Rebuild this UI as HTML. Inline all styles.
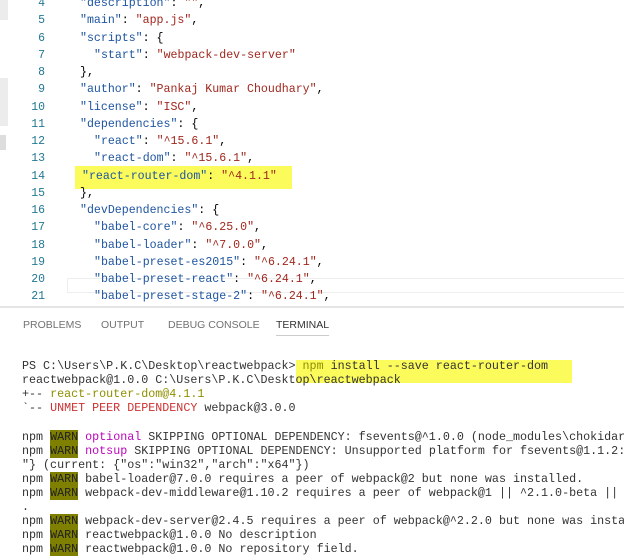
<!DOCTYPE html>
<html><head><style>
body{margin:0;width:624px;height:559px;background:#fff;overflow:hidden;position:relative;font-family:"Liberation Mono",monospace;}
.l{position:absolute;white-space:pre;font-size:11.5px;line-height:14px;}
.n{position:absolute;width:45px;text-align:right;color:#237893;font-size:11.5px;line-height:14px;font-family:"Liberation Mono",monospace;}
.k{color:#1f55a0}.s{color:#a0281e}.p{color:#000}
.t{color:#333;font-size:11.7px;}
.g{color:#8f8f00}.r{color:#cd3131}.m{color:#bc05bc}
.w{background:#7f7f00;color:#222}
.tab{position:absolute;top:319px;font-family:"Liberation Sans",sans-serif;font-size:10.5px;color:#717171;}
</style></head><body>
<div style="position:absolute;left:0;top:0;width:8px;height:20px;background:#ececec"></div>
<div style="position:absolute;left:0;top:78px;width:8px;height:48px;background:#ececec"></div>
<div style="position:absolute;left:0;top:135px;width:6px;height:15px;background:#ddd"></div>
<div style="position:absolute;left:75px;top:166px;width:217px;height:23px;background:#fbfb5c"></div>
<div style="position:absolute;left:67px;top:278px;width:560px;height:15px;border:1px solid #eee;box-sizing:border-box"></div>
<div id="code"></div>
<div style="position:absolute;left:0;top:306px;width:624px;height:2px;background:#e5e5e5"></div>
<div class="tab" style="left:23px">PROBLEMS</div>
<div class="tab" style="left:101px">OUTPUT</div>
<div class="tab" style="left:168px">DEBUG CONSOLE</div>
<div class="tab" style="left:276px;color:#333;border-bottom:1px solid #ccc;padding-bottom:4px">TERMINAL</div>
<div style="position:absolute;left:296px;top:360px;width:276px;height:23px;background:#fbfb5c"></div>
<div id="term"></div>
<script>
var code=[
[4,80,'<span class="k">"description"</span>: <span class="s">""</span>,'],
[5,80,'<span class="k">"main"</span>: <span class="s">"app.js"</span>,'],
[6,80,'<span class="k">"scripts"</span>: {'],
[7,94,'<span class="k">"start"</span>: <span class="s">"webpack-dev-server"</span>'],
[8,80,'},'],
[9,80,'<span class="k">"author"</span>: <span class="s">"Pankaj Kumar Choudhary"</span>,'],
[10,80,'<span class="k">"license"</span>: <span class="s">"ISC"</span>,'],
[11,80,'<span class="k">"dependencies"</span>: {'],
[12,94,'<span class="k">"react"</span>: <span class="s">"^15.6.1"</span>,'],
[13,94,'<span class="k">"react-dom"</span>: <span class="s">"^15.6.1"</span>,'],
[14,82,'<span class="k">"react-router-dom"</span>: <span class="s">"^4.1.1"</span>'],
[15,80,'},'],
[16,80,'<span class="k">"devDependencies"</span>: {'],
[17,94,'<span class="k">"babel-core"</span>: <span class="s">"^6.25.0"</span>,'],
[18,94,'<span class="k">"babel-loader"</span>: <span class="s">"^7.0.0"</span>,'],
[19,94,'<span class="k">"babel-preset-es2015"</span>: <span class="s">"^6.24.1"</span>,'],
[20,94,'<span class="k">"babel-preset-react"</span>: <span class="s">"^6.24.1"</span>,'],
[21,94,'<span class="k">"babel-preset-stage-2"</span>: <span class="s">"^6.24.1"</span>,']];
var h='';
code.forEach(function(c){var y=4+(c[0]-4)*17.25-7;
h+='<div class="n" style="top:'+y+'px;left:0">'+c[0]+'</div><div class="l" style="top:'+y+'px;left:'+c[1]+'px;font-size:11.6px">'+c[2]+'</div>';});
document.getElementById('code').innerHTML=h;
var W='<span class="w">WARN</span>';
var term=[
[366,'PS C:\\Users\\P.K.C\\Desktop\\reactwebpack&gt; <span class="g">npm</span> install --save react-router-dom'],
[380,'reactwebpack@1.0.0 C:\\Users\\P.K.C\\Desktop\\reactwebpack'],
[394,'+-- <span class="g">react-router-dom@4.1.1</span>'],
[408,'`-- <span class="r">UNMET PEER DEPENDENCY</span> webpack@3.0.0'],
[437,'npm '+W+' <span class="m">optional</span> SKIPPING OPTIONAL DEPENDENCY: fsevents@^1.0.0 (node_modules\\chokidar\\'],
[451,'npm '+W+' <span class="m">notsup</span> SKIPPING OPTIONAL DEPENDENCY: Unsupported platform for fsevents@1.1.2: '],
[465,'"} (current: {"os":"win32","arch":"x64"})'],
[479,'npm '+W+' babel-loader@7.0.0 requires a peer of webpack@2 but none was installed.'],
[493,'npm '+W+' webpack-dev-middleware@1.10.2 requires a peer of webpack@1 || ^2.1.0-beta || ^'],
[507,'.'],
[521,'npm '+W+' webpack-dev-server@2.4.5 requires a peer of webpack@^2.2.0 but none was install'],
[535,'npm '+W+' reactwebpack@1.0.0 No description'],
[549,'npm '+W+' reactwebpack@1.0.0 No repository field.']];
h='';
term.forEach(function(t){h+='<div class="l t" style="top:'+(t[0]-7)+'px;left:22px">'+t[1]+'</div>';});
document.getElementById('term').innerHTML=h;
</script>
</body></html>
